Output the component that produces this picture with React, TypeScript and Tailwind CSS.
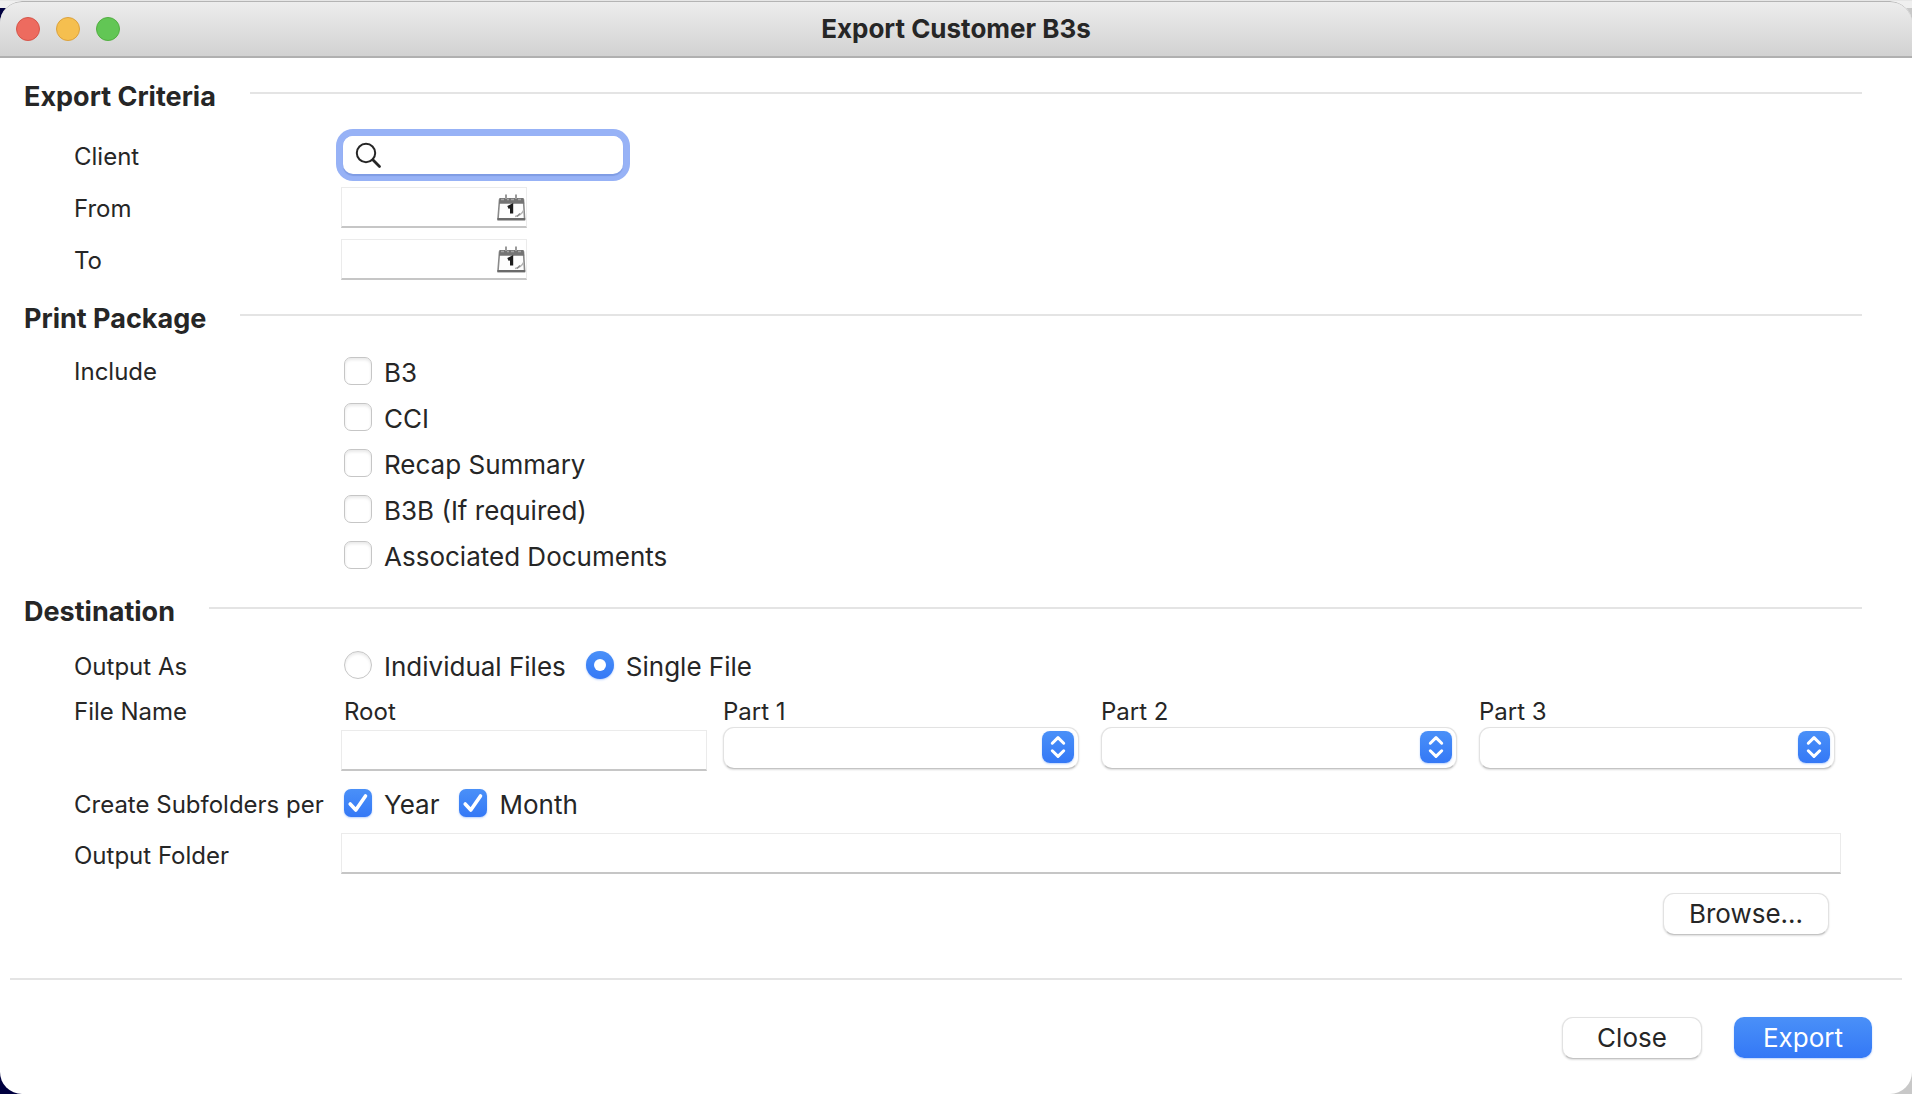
import { useState } from 'react';
import type { ReactNode } from 'react';

const fieldClass =
  'block w-full h-[41px] bg-white border border-[#ebebeb] border-b-2 border-b-[#c6c6c6] px-2 text-2xl outline-none';

const pushButton =
  'h-[42px] rounded-[11px] border border-[#e2e2e2] border-b-[#c4c4c4] bg-white text-[26px] leading-8 shadow-[0_1px_2px_rgba(0,0,0,0.14)]';

function SectionHeader({ title }: { title: string }) {
  return (
    <div className="flex h-8 items-center gap-[34px] pl-6 pr-[50px]">
      <h2 className="text-[27px] leading-8 font-bold whitespace-nowrap">{title}</h2>
      <div className="-mt-2 h-0.5 flex-1 bg-[#e4e4e4]" />
    </div>
  );
}

type RowProps = {
  label: string;
  htmlFor?: string;
  className: string;
  labelPad?: string;
  children: ReactNode;
};

function Row({ label, htmlFor, className, labelPad = 'pt-1', children }: RowProps) {
  const text = `w-[267px] shrink-0 text-2xl leading-8 whitespace-nowrap ${labelPad}`;
  return (
    <div className={`flex pl-[74px] pr-[71px] ${className}`}>
      {htmlFor ? (
        <label htmlFor={htmlFor} className={text}>{label}</label>
      ) : (
        <span className={text}>{label}</span>
      )}
      {children}
    </div>
  );
}

function CalendarIcon() {
  return (
    <svg width="30" height="28" viewBox="0 0 30 28" fill="none" aria-hidden="true">
      <path d="M3.5 6H27.5L28.6 25H2Z" fill="#fdfdfd" stroke="#8a8a8a" strokeWidth="1.6" />
      <path d="M3.4 4H27.6L28.2 9.8H3Z" fill="#747474" />
      <path d="M5 5.5h3M11 5.5h2M15 5.5h3M22 5.5h3" stroke="#a5a5a5" strokeWidth="1.5" />
      <path d="M10 0.5V5M20 0.5V5" stroke="#9a9a9a" strokeWidth="2" />
      <path d="M1.4 25.2H29.2" stroke="#6a6a6a" strokeWidth="2.4" />
      <path d="M12 13.5L15.6 11.6V19.5" stroke="#1c1c1c" strokeWidth="3.2" />
      <path d="M19 22.5C22 22 26 20 27.5 16.5" stroke="#b4b4b4" strokeWidth="1.5" />
      <path d="M21 22.5L24 19.5" stroke="#8a8a8a" strokeWidth="1.4" />
    </svg>
  );
}

function DateField({ id, label }: { id: string; label: string }) {
  return (
    <div className="relative w-[186px]">
      <input id={id} type="text" className={fieldClass} />
      <button type="button" aria-label={`Pick ${label} date`} className="absolute right-px top-[7px]">
        <CalendarIcon />
      </button>
    </div>
  );
}

function Check({ label, initial = false }: { label: string; initial?: boolean }) {
  const [on, setOn] = useState(initial);
  return (
    <label className="flex h-[46px] items-center gap-3 text-[26px] leading-8 whitespace-nowrap">
      <span className="relative block size-7">
        <input
          type="checkbox"
          checked={on}
          onChange={(e) => setOn(e.target.checked)}
          className="block size-7 appearance-none rounded-[7px] border border-[#c6c6c6] bg-white shadow-[inset_0_2px_3px_rgba(0,0,0,0.09)] checked:border-0 checked:bg-linear-to-b checked:from-[#4a90f8] checked:to-[#3478f6] checked:shadow-[0_1px_2px_rgba(52,120,246,0.35)]"
        />
        {on && (
          <svg className="pointer-events-none absolute inset-0" viewBox="0 0 28 28" fill="none" aria-hidden="true">
            <path d="M6.2 15L11.8 21L21.5 7" stroke="#fff" strokeWidth="3.6" strokeLinecap="round" strokeLinejoin="round" />
          </svg>
        )}
      </span>
      <span className="pt-1">{label}</span>
    </label>
  );
}

function Radio({ label, checked, onChange }: { label: string; checked: boolean; onChange: () => void }) {
  return (
    <label className="flex items-center gap-3 text-[26px] leading-8 whitespace-nowrap">
      <span className="relative block size-7">
        <input
          type="radio"
          name="output"
          checked={checked}
          onChange={onChange}
          className="block size-7 appearance-none rounded-full border border-[#c6c6c6] bg-white shadow-[inset_0_2px_3px_rgba(0,0,0,0.09)] checked:border-0 checked:bg-linear-to-b checked:from-[#4a90f8] checked:to-[#3478f6] checked:shadow-[0_1px_2px_rgba(52,120,246,0.35)]"
        />
        {checked && <span className="pointer-events-none absolute inset-2 rounded-full bg-white" />}
      </span>
      <span className="pt-1">{label}</span>
    </label>
  );
}

function PartSelect({ label, id }: { label: string; id: string }) {
  return (
    <div className="mr-1.5">
      <label htmlFor={id} className="block h-[34px] pt-[3px] text-2xl leading-8">{label}</label>
      <div className="relative">
        <select
          id={id}
          className="block h-[42px] w-full appearance-none rounded-[11px] border border-[#e2e2e2] border-b-[#c4c4c4] bg-white pl-4 text-2xl shadow-[0_1px_2px_rgba(0,0,0,0.14)]"
        >
          <option value="" />
        </select>
        <span className="pointer-events-none absolute right-[5px] top-1 size-8 rounded-lg bg-linear-to-b from-[#4a90f8] to-[#3478f6] shadow-[0_1px_2px_rgba(52,120,246,0.35)]">
          <svg viewBox="0 0 32 32" fill="none" aria-hidden="true">
            <path d="M10.3 12.2L16 6.6L21.7 12.2M10.3 19.8L16 25.4L21.7 19.8" stroke="#fff" strokeWidth="3" strokeLinecap="round" strokeLinejoin="round" />
          </svg>
        </span>
      </div>
    </div>
  );
}

export default function App() {
  const [output, setOutput] = useState('single');
  return (
    <div className="flex min-h-screen flex-col bg-[linear-gradient(to_bottom,#efefef_8px,transparent_8px),linear-gradient(to_right,#00003f_50%,#c8c8c8_50%)] font-['Inter',sans-serif] text-[#262626]">
      <div className="h-px bg-[#e6e6e6]" />
      <div className="flex flex-1 flex-col overflow-hidden rounded-[22px] bg-white">
        <header className="grid h-[57px] grid-cols-[1fr_auto_1fr] items-center rounded-t-[22px] border-t border-b-2 border-t-[#b4b4b4] border-b-[#b0b0b0] bg-linear-to-b from-[#ededed] to-[#d2d2d2] px-4">
          <div className="flex gap-4">
            <button type="button" aria-label="Close window" className="size-6 rounded-full border border-[#d55549] bg-[#ed6b5f]" />
            <button type="button" aria-label="Minimize window" className="size-6 rounded-full border border-[#dba13c] bg-[#f5bf4f]" />
            <button type="button" aria-label="Zoom window" className="size-6 rounded-full border border-[#52ae41] bg-[#62c655]" />
          </div>
          <h1 className="text-[26px] leading-8 font-bold">Export Customer B3s</h1>
        </header>

        <form className="flex flex-1 flex-col" onSubmit={(e) => e.preventDefault()}>
          <section className="pt-[23px]">
            <SectionHeader title="Export Criteria" />
            <div className="pt-[15px]">
              <Row label="Client" htmlFor="client" className="h-[53px] items-center">
                <div className="ml-0.5 relative h-[38px] w-[280px] rounded-[10px] ring-[7px] ring-[#97b2f6]">
                  <input id="client" type="text" className="block size-full rounded-[10px] bg-white pl-12 pr-3 text-2xl shadow-[0_2px_1px_#7f9ce4] outline-none" />
                  <svg className="pointer-events-none absolute left-3 top-1.5" width="27" height="27" viewBox="0 0 27 27" fill="none" aria-hidden="true">
                    <circle cx="11" cy="11" r="9.2" stroke="#262626" strokeWidth="2" />
                    <path d="M17.8 17.8L24.5 24.5" stroke="#262626" strokeWidth="2.8" strokeLinecap="round" />
                  </svg>
                </div>
              </Row>
              <Row label="From" htmlFor="from" className="h-[52px] items-center">
                <DateField id="from" label="from" />
              </Row>
              <Row label="To" htmlFor="to" className="h-[52px] items-center">
                <DateField id="to" label="to" />
              </Row>
            </div>
          </section>

          <section className="pt-[18px]">
            <SectionHeader title="Print Package" />
            <div className="pt-[13px]">
              <Row label="Include" className="items-start" labelPad="pt-2">
                <div className="pl-[3px]">
                  <Check label="B3" />
                  <Check label="CCI" />
                  <Check label="Recap Summary" />
                  <Check label="B3B (If required)" />
                  <Check label="Associated Documents" />
                </div>
              </Row>
            </div>
          </section>

          <section className="pt-[18px]">
            <SectionHeader title="Destination" />
            <div className="pt-4">
              <Row label="Output As" className="h-[42px] items-center">
                <div className="flex gap-5 pl-[3px]">
                  <Radio label="Individual Files" checked={output === 'individual'} onChange={() => setOutput('individual')} />
                  <Radio label="Single File" checked={output === 'single'} onChange={() => setOutput('single')} />
                </div>
              </Row>
              <Row label="File Name" className="items-start pt-[7px]" labelPad="pt-[3px]">
                <div className="grid flex-1 grid-cols-[366fr_362fr_362fr_362fr] gap-4">
                  <div>
                    <label htmlFor="root-name" className="block h-[37px] pl-[3px] pt-[3px] text-2xl leading-8">Root</label>
                    <input id="root-name" type="text" className={fieldClass} />
                  </div>
                  <PartSelect label="Part 1" id="part1" />
                  <PartSelect label="Part 2" id="part2" />
                  <PartSelect label="Part 3" id="part3" />
                </div>
              </Row>
              <Row label="Create Subfolders per" className="items-center pt-[9px]">
                <div className="flex gap-5 pl-[3px]">
                  <Check label="Year" initial />
                  <Check label="Month" initial />
                </div>
              </Row>
              <Row label="Output Folder" htmlFor="folder" className="items-center pt-[7px]">
                <div className="flex-1">
                  <input id="folder" type="text" className={fieldClass} />
                </div>
              </Row>
              <div className="flex justify-end pr-[83px] pt-[19px]">
                <button type="button" className={`${pushButton} w-[166px]`}>Browse...</button>
              </div>
            </div>
          </section>

          <footer className="mx-2.5 mt-[43px] flex justify-end gap-8 border-t-2 border-[#e4e4e4] pr-[30px] pt-[37px]">
            <button type="button" className={`${pushButton} w-[140px]`}>Close</button>
            <button type="submit" className="h-[41px] w-[138px] rounded-[10px] bg-linear-to-b from-[#4a90f8] to-[#3478f6] text-[26px] leading-8 text-white shadow-[0_1px_2px_rgba(52,120,246,0.35)]">Export</button>
          </footer>
        </form>
      </div>
    </div>
  );
}
